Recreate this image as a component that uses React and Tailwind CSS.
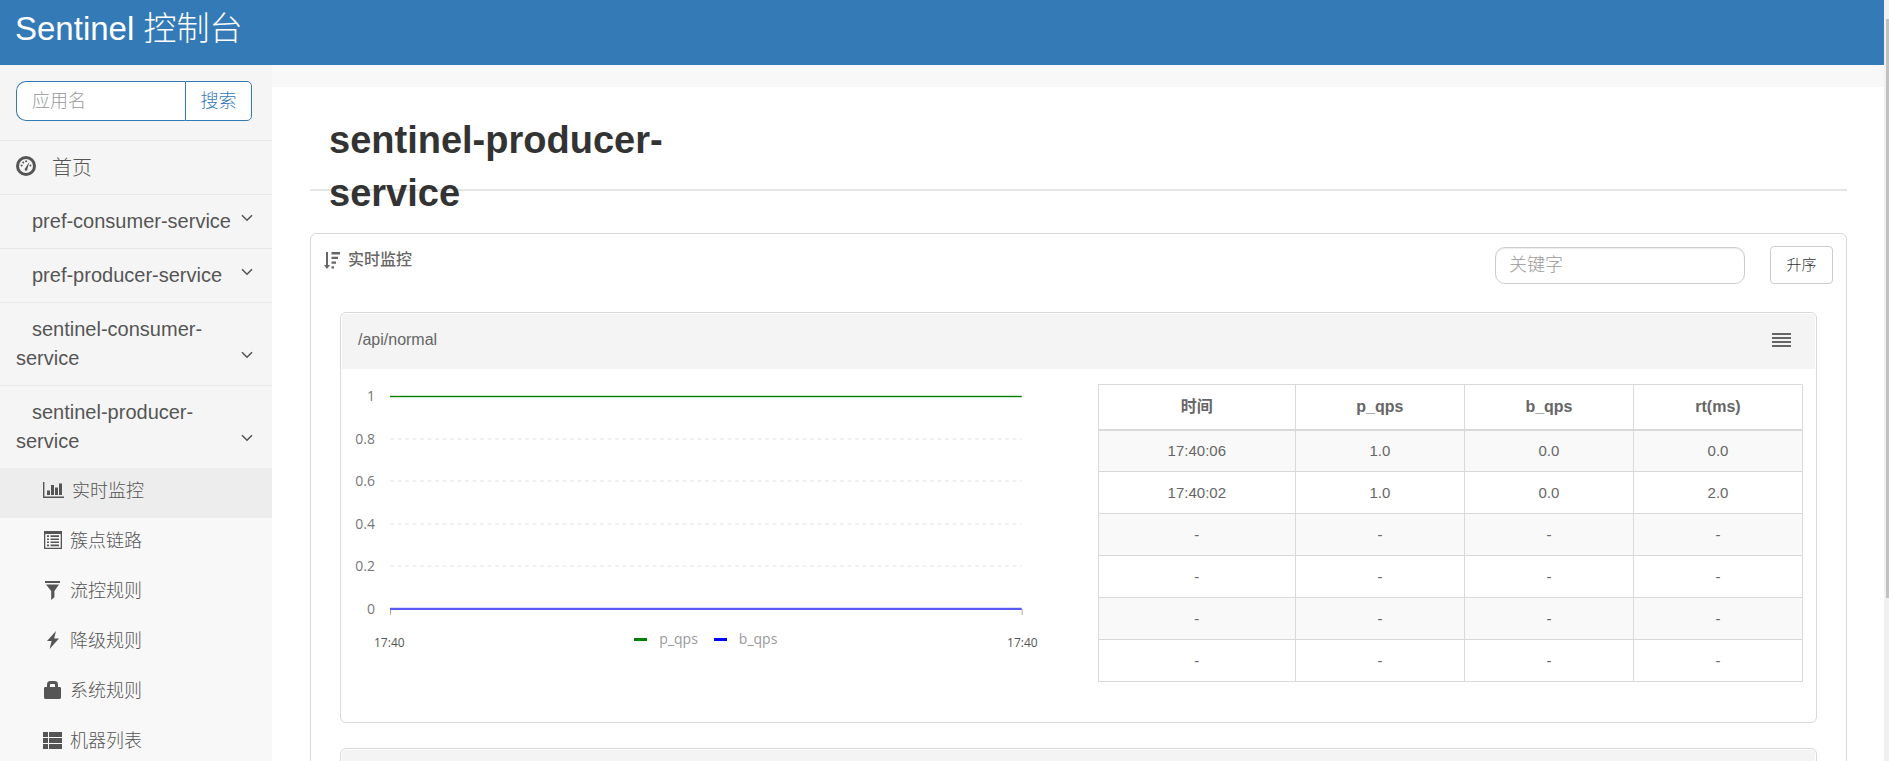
import React from "react";

const HomeIcon = () => (
  <svg width="20" height="20" viewBox="0 0 20 20" fill="none" aria-hidden="true">
    <circle cx="10" cy="10" r="8.5" stroke="currentColor" strokeWidth="3" />
    <path d="M9.2 12.2 13.4 5.8 11.4 13a1.4 1.4 0 1 1-2.200-.8z" fill="currentColor" />
    <g fill="currentColor">
      <circle cx="5.600" cy="9.400" r="1" />
      <circle cx="7.200" cy="6.400" r="1" />
      <circle cx="10.200" cy="5.200" r="1" />
      <circle cx="14.400" cy="9.400" r="1" />
    </g>
  </svg>
);

const Chevron = () => (
  <svg width="12" height="8" viewBox="0 0 12 8" fill="none" aria-hidden="true">
    <path d="M1 1.2 6 6.2 11 1.2" stroke="currentColor" strokeWidth="1.6" />
  </svg>
);

const ChartIcon = () => (
  <svg width="21" height="16" viewBox="0 0 21 16" fill="currentColor" aria-hidden="true">
    <path d="M0 0h1.4v14.4H21V16H0zM4 8.500h3V13H4zM8 3h3v10H8zM12 5.500h3V13h-3zM16 1.500h3V13h-3z" />
  </svg>
);

const ListAltIcon = () => (
  <svg width="18" height="18" viewBox="0 0 18 18" fill="currentColor" aria-hidden="true">
    <path
      fillRule="evenodd"
      d="M0 0h18v18H0zM1.300 3v13.700h15.400V3zM3 4.300h2v1.600H3zM6.500 4.300H15v1.600H6.500zM3 7.400h2V9H3zM6.500 7.400H15V9H6.500zM3 10.500h2v1.600H3zM6.500 10.500H15v1.600H6.500zM3 13.600h2v1.600H3zM6.500 13.600H15v1.600H6.500z"
    />
  </svg>
);

const FilterIcon = () => (
  <svg width="16" height="19" viewBox="0 0 16 19" fill="currentColor" aria-hidden="true">
    <path d="M0 0h15v2H0zM1 3.400h13L9.400 10v6.200L6.200 19v-9z" />
  </svg>
);

const FlashIcon = () => (
  <svg width="12" height="18" viewBox="0 0 12 18" fill="currentColor" aria-hidden="true">
    <path d="M9 0 0 10h4.600L2.600 18 12 7.400H7.200z" />
  </svg>
);

const LockIcon = () => (
  <svg width="17" height="18" viewBox="0 0 17 18" fill="currentColor" aria-hidden="true">
    <path
      fillRule="evenodd"
      d="M3 6V3.400C3 1.200 4.400 0 6.400 0h4.200C12.600 0 14 1.200 14 3.400V6h1.600c.8 0 1.400.6 1.400 1.400v9.200c0 .8-.6 1.400-1.400 1.400H1.400C.6 18 0 17.400 0 16.600V7.400C0 6.600.6 6 1.400 6zM6 6h5V4c0-.7-.4-1-1-1H7c-.6 0-1 .3-1 1z"
    />
  </svg>
);

const ThListIcon = () => (
  <svg width="19" height="17" viewBox="0 0 19 17" fill="currentColor" aria-hidden="true">
    <path d="M0 0h5v5H0zM6 0h13v5H6zM0 6h5v5H0zM6 6h13v5H6zM0 12h5v5H0zM6 12h13v5H6z" />
  </svg>
);

const SortIcon = () => (
  <svg width="16" height="17" viewBox="0 0 16 17" fill="currentColor" aria-hidden="true">
    <path d="M2 0h2v13h2L3 17 0 13h2zM7.500 0H16v2.400H7.500zM7.500 4.800H14v2.200H7.500zM7.500 9.600H12v2.200H7.500zM7.500 14.200H10v2.200H7.500z" />
  </svg>
);

const apps = [
  "pref-consumer-service",
  "pref-producer-service",
  "sentinel-consumer-service",
  "sentinel-producer-service",
];

const menu = [
  { label: "实时监控", Icon: ChartIcon, active: true },
  { label: "簇点链路", Icon: ListAltIcon },
  { label: "流控规则", Icon: FilterIcon },
  { label: "降级规则", Icon: FlashIcon },
  { label: "系统规则", Icon: LockIcon },
  { label: "机器列表", Icon: ThListIcon },
];

const columns = ["时间", "p_qps", "b_qps", "rt(ms)"];
const rows = [
  ["17:40:06", "1.0", "0.0", "0.0"],
  ["17:40:02", "1.0", "0.0", "2.0"],
  ["-", "-", "-", "-"],
  ["-", "-", "-", "-"],
  ["-", "-", "-", "-"],
  ["-", "-", "-", "-"],
];

const ticks = ["1", "0.8", "0.6", "0.4", "0.2", "0"];
const PLOT_TOP = 12;
const PLOT_HEIGHT = 213;
const tickY = (i) => PLOT_TOP + Math.round((PLOT_HEIGHT * i) / (ticks.length - 1));

function Sidebar() {
  return (
    <aside className="w-[272px] shrink-0 bg-[#f8f8f8] font-light text-[#555]">
      <div className="bg-[#f5f5f5]">
        <form className="flex border-b border-[#e7e7e7] px-4 pt-4 pb-[19px] pr-5">
          <input
            type="text"
            aria-label="应用名"
            placeholder="应用名"
            className="h-10 min-w-0 flex-1 rounded-l-[10px] border border-r-0 border-[#337ab7] bg-white px-[15px] text-lg outline-none placeholder:text-[#999]"
          />
          <button
            type="button"
            className="h-10 w-[67px] rounded-r-[5px] border border-[#337ab7] bg-white text-lg text-[#337ab7]"
          >
            搜索
          </button>
        </form>
        <a href="#home" className="flex h-[54px] items-center gap-4 border-b border-[#e7e7e7] px-4 text-xl">
          <span className="pb-1">
            <HomeIcon />
          </span>
          首页
        </a>
        {apps.map((name, i) => (
          <a
            key={name}
            href={"#" + name}
            className={
              "flex items-end justify-between border-[#e7e7e7] py-3 pr-[19px] pl-4 text-xl leading-[29px] " +
              (i < apps.length - 1 ? "border-b" : "")
            }
          >
            <span className="min-w-0 indent-4">{name}</span>
            <span className="-ml-2 pb-[14px]">
              <Chevron />
            </span>
          </a>
        ))}
      </div>
      <nav>
        {menu.map(({ label, Icon, active }) => (
          <a
            key={label}
            href={"#" + label}
            className={
              "flex h-[50px] items-center gap-2 pb-1 pl-[43px] text-lg " + (active ? "bg-[#ededed]" : "")
            }
          >
            <span className="flex min-w-[19px] justify-center pb-0.5">
              <Icon />
            </span>
            {label}
          </a>
        ))}
      </nav>
    </aside>
  );
}

function Chart() {
  return (
    <div className="min-w-0 pr-[76px] pl-12 font-['Open_Sans','Noto_Sans',sans-serif]">
      <svg className="block h-[232px] w-full overflow-visible" role="img" aria-label="QPS">
        {ticks.map((t, i) => (
          <g key={t}>
            <text x="-15" y={tickY(i) + 5} textAnchor="end" fontSize="14" fill="#777">
              {t}
            </text>
            {i > 0 && i < ticks.length - 1 && (
              <line
                x1="0"
                x2="100%"
                y1={tickY(i)}
                y2={tickY(i)}
                stroke="#f1f1f1"
                strokeWidth="2"
                strokeDasharray="4 3.500"
              />
            )}
          </g>
        ))}
        <rect x="0" y="225" width="1" height="6" fill="#aaa" />
        <rect x="100%" y="225" width="1" height="6" fill="#aaa" />
        <rect x="0" y="11" width="100%" height="3" fill="#008000" fillOpacity="0.2" />
        <rect x="0" y="12" width="100%" height="1" fill="#008000" />
        <rect x="0" y="223" width="100%" height="1" fill="#0000ff" fillOpacity="0.15" />
        <rect x="0" y="224" width="100%" height="2" fill="#5858f5" />
      </svg>
      <div className="-mx-4 mt-[13px] flex items-start justify-between">
        <span className="pt-1.5 text-xs leading-4 text-[#555]">17:40</span>
        <div className="flex items-center gap-4 text-sm text-[#999]">
          <span className="flex items-center gap-3">
            <i className="h-[3px] w-[13px] bg-[#008000]" />
            p_qps
          </span>
          <span className="flex items-center gap-3">
            <i className="h-[3px] w-[13px] bg-[#0000ff]" />
            b_qps
          </span>
        </div>
        <span className="pt-1.5 text-xs leading-4 text-[#555]">17:40</span>
      </div>
    </div>
  );
}

function MetricTable() {
  return (
    <table className="w-full table-fixed border-collapse text-center leading-6">
      <colgroup>
        <col className="w-[28%]" />
        <col className="w-[24%]" />
        <col className="w-[24%]" />
        <col className="w-[24%]" />
      </colgroup>
      <thead>
        <tr className="h-[45px]">
          {columns.map((c) => (
            <th key={c} scope="col" className="border border-b-2 border-[#d9d9d9] font-bold">
              {c}
            </th>
          ))}
        </tr>
      </thead>
      <tbody className="text-[15px]">
        {rows.map((r, i) => (
          <tr key={i} className="h-[42px] odd:bg-[#f9f9f9]">
            {r.map((v, j) => (
              <td key={j} className="border border-[#d9d9d9]">
                {v}
              </td>
            ))}
          </tr>
        ))}
      </tbody>
    </table>
  );
}

function MetricCard({ title, children }) {
  return (
    <section className="rounded-md border border-[#d9d9d9] bg-white p-px">
      <header className="flex h-[55px] items-center justify-between rounded-t bg-[#f4f4f4] pr-6 pb-1 pl-4">
        <h2>{title}</h2>
        <button type="button" aria-label="菜单" className="flex flex-col gap-0.5">
          <i className="h-0.5 w-[19px] bg-[#666]" />
          <i className="h-0.5 w-[19px] bg-[#666]" />
          <i className="h-0.5 w-[19px] bg-[#666]" />
          <i className="h-0.5 w-[19px] bg-[#666]" />
        </button>
      </header>
      {children}
    </section>
  );
}

export default function App() {
  return (
    <div className="relative flex h-screen flex-col overflow-hidden bg-white pr-[5px] font-['Liberation_Sans','Noto_Sans_CJK_SC',sans-serif]">
      <header className="h-[65px] shrink-0 bg-[#337ab7] px-[15px] pt-[5px] text-[33px] leading-[48px] font-light text-white">
        <h1>Sentinel 控制台</h1>
      </header>
      <div className="flex min-h-0 flex-1">
        <Sidebar />
        <main className="min-w-0 flex-1 border-t-[22px] border-[#f8f8f8] pr-[37px] pl-[38px] text-base text-[#666]">
          <div className="mb-[42px] h-[104px] border-b-2 border-[#e5e5e5] px-[19px] pt-[27px]">
            <h2 className="w-1/4 text-[38px] leading-[53px] font-bold text-[#333]">
              sentinel-producer-service
            </h2>
          </div>
          <div className="rounded-md border border-[#d9d9d9]">
            <div className="flex items-start justify-between px-[13px] pt-3">
              <div className="flex items-center gap-2 pt-0.5 font-medium">
                <SortIcon />
                实时监控
              </div>
              <div className="flex items-end gap-[25px] font-light">
                <input
                  type="text"
                  aria-label="关键字"
                  placeholder="关键字"
                  className="h-[37px] w-[250px] rounded-[10px] border border-[#ccc] px-[13px] text-lg shadow-[inset_0_1px_1px_rgba(0,0,0,0.075)] outline-none placeholder:text-[#999]"
                />
                <button
                  type="button"
                  className="h-[38px] w-[63px] rounded border border-[#ccc] bg-white text-[15px] text-[#333]"
                >
                  升序
                </button>
              </div>
            </div>
            <div className="flex flex-col gap-[25px] px-[29px] pt-7">
              <MetricCard title="/api/normal">
                <div className="grid grid-cols-[15fr_14fr] items-start pt-[15px] pr-3 pb-[39px]">
                  <Chart />
                  <MetricTable />
                </div>
              </MetricCard>
              <MetricCard title="" />
            </div>
          </div>
        </main>
      </div>
      <div className="absolute inset-y-0 right-0 w-[5px] bg-[#f1f1f1] pt-[19px] pl-0.5" aria-hidden="true">
        <div className="h-[78%] bg-[#c1c1c1]" />
      </div>
    </div>
  );
}
